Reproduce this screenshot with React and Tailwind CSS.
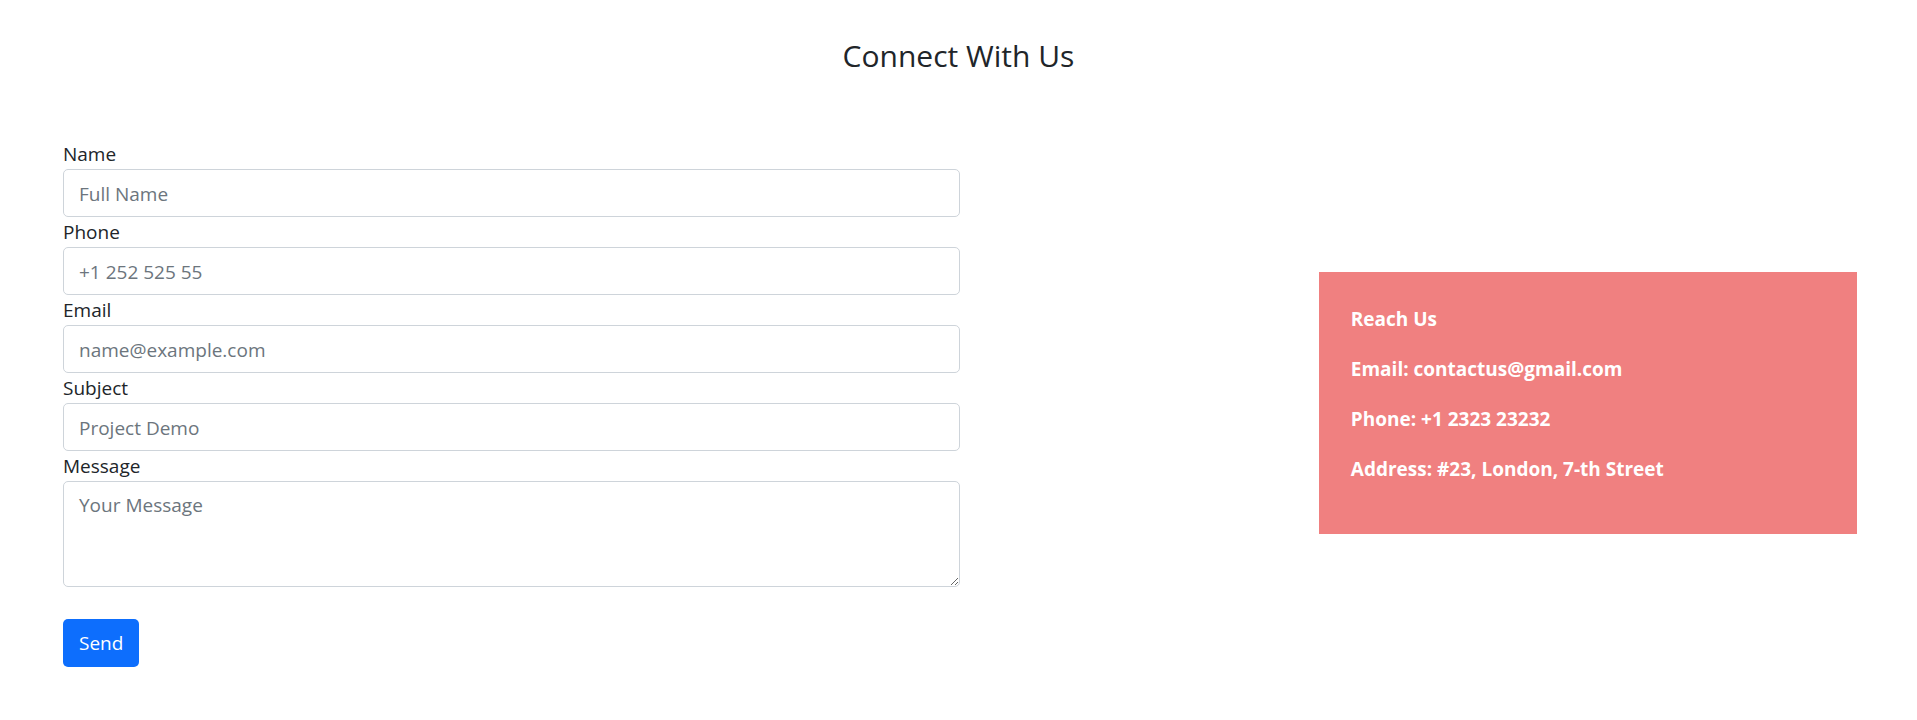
const inputClass =
  "block w-full rounded-[5px] border border-[#ced4da] bg-white px-[15px] text-[19px] leading-[30px] text-[#212529] placeholder:text-[#6c757d] placeholder:opacity-100 outline-none focus:border-[#86b7fe]";

const fields = [
  { id: "name", label: "Name", type: "text", placeholder: "Full Name" },
  { id: "phone", label: "Phone", type: "tel", placeholder: "+1 252 525 55" },
  { id: "email", label: "Email", type: "email", placeholder: "name@example.com" },
  { id: "subject", label: "Subject", type: "text", placeholder: "Project Demo" },
];

function ContactForm() {
  return (
    <form className="w-1/2" onSubmit={(e) => e.preventDefault()}>
      {fields.map((f) => (
        <div key={f.id}>
          <label htmlFor={f.id} className="block">
            {f.label}
          </label>
          <input id={f.id} type={f.type} placeholder={f.placeholder} className={`${inputClass} h-12 pt-0.5`} />
        </div>
      ))}
      <label htmlFor="message" className="block">
        Message
      </label>
      <textarea
        id="message"
        rows={3}
        placeholder="Your Message"
        className={`${inputClass} resize-y pt-2 pb-1.5`}
      />
      <button
        type="submit"
        className="mt-8 h-12 cursor-pointer rounded-[5px] bg-[#0d6efd] px-4 text-white hover:bg-[#0b5ed7]"
      >
        Send
      </button>
    </form>
  );
}

function ReachUs() {
  return (
    <address className="flex w-[30%] flex-col gap-5 bg-[#f08080] px-8 pt-8 pb-[50px] font-bold text-white not-italic">
      <p>Reach Us</p>
      <p>Email: contactus@gmail.com</p>
      <p>Phone: +1 2323 23232</p>
      <p>Address: #23, London, 7-th Street</p>
    </address>
  );
}

export default function App() {
  return (
    <main className="bg-white font-['Open_Sans','Noto_Sans',sans-serif] text-[19px] leading-[30px] text-[#212529]">
      <h1 className="pt-[38px] text-center text-[30px] leading-9">Connect With Us</h1>
      <section className="flex items-center justify-between pt-[65px] pr-[60px] pb-[53px] pl-[63px]">
        <ContactForm />
        <ReachUs />
      </section>
    </main>
  );
}
